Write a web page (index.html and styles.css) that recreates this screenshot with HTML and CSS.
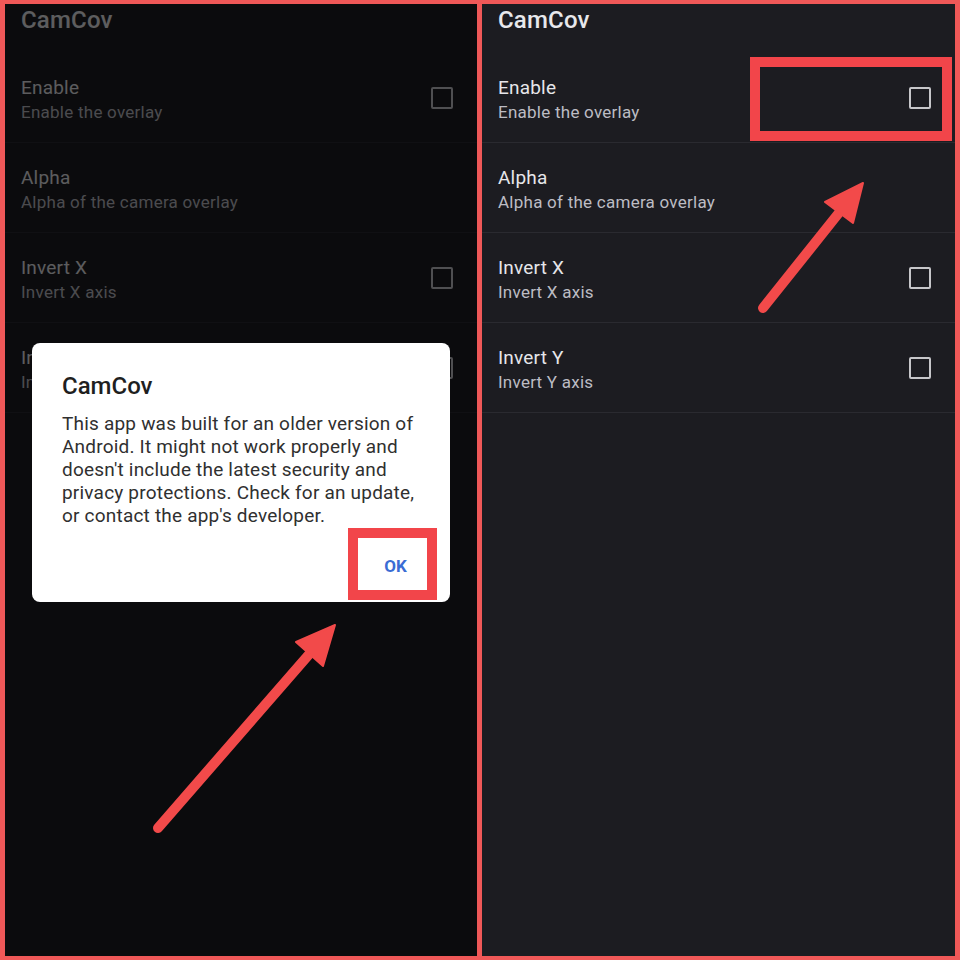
FILE: index.html
```html
<!DOCTYPE html>
<html lang="en">
<head>
<meta charset="utf-8">
<title>CamCov</title>
<link rel="stylesheet" href="styles.css">
</head>
<body>
<div class="frame">
  <section class="panel">
    <div class="screen">
      <header class="appbar">CamCov</header>
      <div class="row"><div class="texts"><div class="t">Enable</div><div class="s">Enable the overlay</div></div><span class="cb"></span></div>
      <div class="row"><div class="texts"><div class="t">Alpha</div><div class="s">Alpha of the camera overlay</div></div></div>
      <div class="row"><div class="texts"><div class="t">Invert X</div><div class="s">Invert X axis</div></div><span class="cb"></span></div>
      <div class="row"><div class="texts"><div class="t">Invert Y</div><div class="s">Invert Y axis</div></div><span class="cb"></span></div>
    </div>
    <div class="scrim"></div>
    <div class="dialog">
      <h2 class="d-title">CamCov</h2>
      <p class="d-body">This app was built for an older version of Android. It might not work properly and doesn't include the latest security and privacy protections. Check for an update, or contact the app's developer.</p>
      <div class="d-actions"><button class="ok">OK</button></div>
    </div>
  </section>
  <section class="panel">
    <div class="screen">
      <header class="appbar">CamCov</header>
      <div class="row"><div class="texts"><div class="t">Enable</div><div class="s">Enable the overlay</div></div><span class="cb"></span></div>
      <div class="row"><div class="texts"><div class="t">Alpha</div><div class="s">Alpha of the camera overlay</div></div></div>
      <div class="row"><div class="texts"><div class="t">Invert X</div><div class="s">Invert X axis</div></div><span class="cb"></span></div>
      <div class="row"><div class="texts"><div class="t">Invert Y</div><div class="s">Invert Y axis</div></div><span class="cb"></span></div>
    </div>
    <div class="highlight"></div>
  </section>
  <svg class="arrows" width="960" height="960" viewBox="0 0 960 960" aria-hidden="true">
    <g fill="#f24a4a" stroke="#f24a4a" stroke-linecap="round" stroke-linejoin="round">
      <line x1="158" y1="828" x2="312" y2="651" stroke-width="10"/>
      <polygon points="335,625 296,642 323,666" stroke-width="2"/>
      <line x1="763" y1="308" x2="842" y2="209" stroke-width="10"/>
      <polygon points="863,183 825,202 853,223" stroke-width="2"/>
    </g>
  </svg>
</div>
</body>
</html>
```
FILE: styles.css
```css
* { box-sizing: border-box; }
html, body { margin: 0; padding: 0; }
body {
  width: 960px;
  height: 960px;
  background: #ef5858;
  font-family: Roboto, "Noto Sans", "Liberation Sans", sans-serif;
}
.frame {
  position: relative;
  width: 960px;
  height: 960px;
  padding: 4px 5px 4px 5px;
  display: grid;
  grid-template-columns: 472px 473px;
  column-gap: 5px;
}
.panel {
  position: relative;
  overflow: hidden;
  background: #1c1c21;
}
.screen {
  display: flex;
  flex-direction: column;
}
.appbar {
  height: 49px;
  padding-left: 16px;
  font-size: 24px;
  line-height: 32px;
  font-weight: 500;
  letter-spacing: 0.2px;
  color: #e8e8ec;
}
.row {
  height: 90px;
  display: flex;
  align-items: center;
  justify-content: space-between;
  padding: 0 24px 0 16px;
  border-bottom: 1px solid #2a2a30;
}
.texts { padding-top: 5px; }
.t {
  font-size: 19px;
  line-height: 24px;
  letter-spacing: 0.2px;
  color: #e6e6ea;
}
.s {
  margin-top: 0;
  font-size: 17px;
  line-height: 24px;
  letter-spacing: 0.25px;
  color: #bcbcc4;
}
.cb {
  width: 22px;
  height: 22px;
  border: 2px solid #c6c6ca;
  border-radius: 2px;
}
.scrim {
  position: absolute;
  inset: 0;
  background: rgba(0, 0, 0, 0.6);
}
.dialog {
  position: absolute;
  left: 27px;
  top: 339px;
  width: 418px;
  background: #ffffff;
  border-radius: 8px;
  padding: 28px 0 2px 30px;
  display: flex;
  flex-direction: column;
}
.d-title {
  margin: 0 0 11px;
  font-size: 24px;
  line-height: 30px;
  font-weight: 500;
  color: #1f1f1f;
}
.d-body {
  margin: 0;
  padding-right: 26px;
  font-size: 19px;
  line-height: 23px;
  letter-spacing: 0.2px;
  color: #303030;
}
.d-actions {
  display: flex;
  justify-content: flex-end;
  padding-right: 13px;
  margin-top: 1px;
}
.ok {
  width: 89px;
  height: 72px;
  border: 10px solid #f2454a;
  background: #ffffff;
  font-family: inherit;
  font-size: 17px;
  font-weight: 700;
  color: #3a6cd4;
  padding: 4px 0 0 6px;
}
.highlight {
  position: absolute;
  left: 268px;
  top: 53px;
  width: 202px;
  height: 84px;
  border: 10px solid #f2454a;
}
.arrows {
  position: absolute;
  left: 0;
  top: 0;
  pointer-events: none;
}
```
